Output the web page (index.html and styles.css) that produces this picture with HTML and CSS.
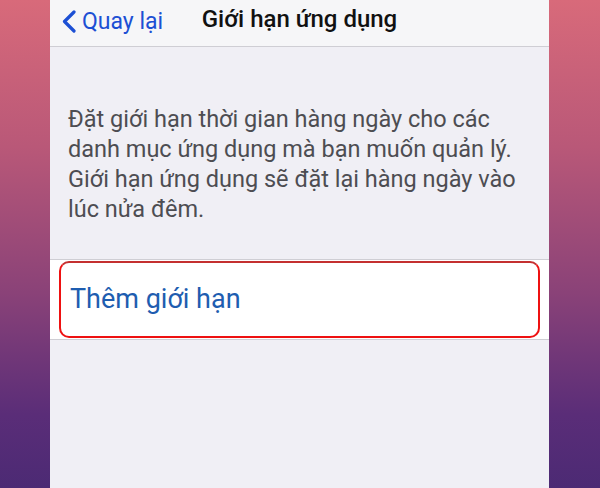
FILE: index.html
```html
<!DOCTYPE html>
<html lang="vi">
<head>
<meta charset="utf-8">
<link rel="stylesheet" href="styles.css">
</head>
<body>
<div class="page">
  <div class="side"></div>
  <div class="screen">
    <header class="nav">
      <div class="back">
        <svg class="chev" width="18" height="24" viewBox="0 0 18 24"><path d="M15 3 L5.5 12.5 L15 22" fill="none" stroke="currentColor" stroke-width="3.2" stroke-linecap="round" stroke-linejoin="round"/></svg>
        <span>Quay lại</span>
      </div>
      <div class="title">Giới hạn ứng dụng</div>
    </header>
    <p class="desc">Đặt giới hạn thời gian hàng ngày cho các<br>danh mục ứng dụng mà bạn muốn quản lý.<br>Giới hạn ứng dụng sẽ đặt lại hàng ngày vào<br>lúc nửa đêm.</p>
    <div class="row">
      <div class="box">Thêm giới hạn</div>
    </div>
  </div>
  <div class="side"></div>
</div>
</body>
</html>
```
FILE: styles.css
```css
html, body { margin: 0; padding: 0; }
body {
  width: 600px;
  height: 488px;
  overflow: hidden;
  font-family: Roboto, "Noto Sans", "Liberation Sans", sans-serif;
  background: linear-gradient(180deg, #d86a7a 0%, #b95878 30%, #8a4278 60%, #5a2d78 85%, #4c2a74 100%);
}
.page {
  display: flex;
  height: 488px;
}
.side { width: 50px; flex: none; }
.screen {
  width: 499px;
  flex: none;
  background: #f0eff5;
  display: flex;
  flex-direction: column;
}
.nav {
  height: 47px;
  box-sizing: border-box;
  background: #f6f6f8;
  border-bottom: 1px solid #cfced4;
  position: relative;
  display: flex;
  align-items: center;
}
.back {
  display: flex;
  align-items: center;
  color: #1c4fd4;
  font-size: 23px;
  margin-left: 9px;
  margin-top: -4px;
}
.chev { margin-right: 5px; }
.title {
  position: absolute;
  left: 0;
  right: 0;
  top: 5px;
  text-align: center;
  font-size: 24px;
  font-weight: 500;
  color: #111;
  pointer-events: none;
}
.desc {
  margin: 57px 10px 0 18px;
  font-size: 23.5px;
  line-height: 30px;
  color: #4d4d52;
  white-space: nowrap;
}
.row {
  margin-top: 35px;
  height: 78px;
  background: #fff;
  border-top: 1px solid #cfced4;
  border-bottom: 1px solid #cfced4;
  box-sizing: content-box;
  padding-top: 1px;
  display: flex;
}
.box {
  margin-left: 9px;
  width: 481px;
  box-sizing: border-box;
  height: 77px;
  border: 2px solid #ee1111;
  border-top-color: #c43030;
  border-radius: 10px;
  display: flex;
  align-items: center;
  padding-left: 9px;
  padding-bottom: 2px;
  font-size: 27px;
  color: #1e5db0;
}
```
